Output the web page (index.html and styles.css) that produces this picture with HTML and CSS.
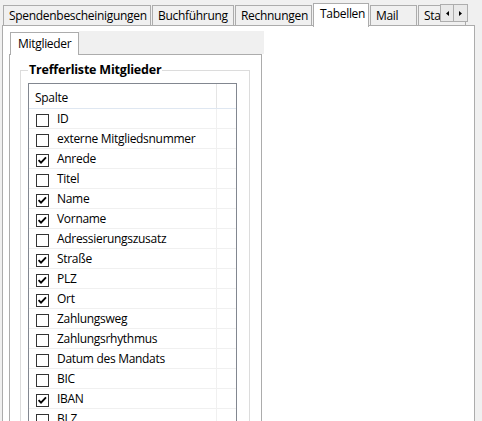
FILE: index.html
```html
<!DOCTYPE html>
<html lang="de">
<head>
<meta charset="utf-8">
<link rel="stylesheet" href="styles.css">
</head>
<body>
<div class="win">
  <div class="tabs">
    <div class="tab w1">Spendenbescheinigungen</div>
    <div class="tab w2">Buchführung</div>
    <div class="tab w3">Rechnungen</div>
    <div class="tab sel w4">Tabellen</div>
    <div class="tab w5">Mail</div>
    <div class="tab w6">Statistik</div>
    <div class="scroller">
      <span class="sbtn"><svg width="3" height="5" viewBox="0 0 3 5"><path d="M3 0V5L0 2.5Z" fill="#000"/></svg></span>
      <span class="sbtn"><svg width="3" height="5" viewBox="0 0 3 5"><path d="M0 0V5L3 2.5Z" fill="#000"/></svg></span>
    </div>
  </div>
  <div class="panel">
    <div class="itabs">
      <div class="itab">Mitglieder</div>
      <div class="istrip"></div>
    </div>
    <div class="ipanel">
      <fieldset class="group">
        <legend>Trefferliste Mitglieder</legend>
        <div class="lv">
          <div class="lvhead"><div class="hc1">Spalte</div><div class="hc2"></div></div>
          <div class="row"><div class="c1"><span class="cb"></span>ID</div><div class="c2"></div></div>
          <div class="row"><div class="c1"><span class="cb"></span>externe Mitgliedsnummer</div><div class="c2"></div></div>
          <div class="row"><div class="c1"><span class="cb on"><svg width="11" height="11" viewBox="0 0 11 11"><path d="M1.6 5.2L4 7.6L9 2.4" fill="none" stroke="#000" stroke-width="1.9"/></svg></span>Anrede</div><div class="c2"></div></div>
          <div class="row"><div class="c1"><span class="cb"></span>Titel</div><div class="c2"></div></div>
          <div class="row"><div class="c1"><span class="cb on"><svg width="11" height="11" viewBox="0 0 11 11"><path d="M1.6 5.2L4 7.6L9 2.4" fill="none" stroke="#000" stroke-width="1.9"/></svg></span>Name</div><div class="c2"></div></div>
          <div class="row"><div class="c1"><span class="cb on"><svg width="11" height="11" viewBox="0 0 11 11"><path d="M1.6 5.2L4 7.6L9 2.4" fill="none" stroke="#000" stroke-width="1.9"/></svg></span>Vorname</div><div class="c2"></div></div>
          <div class="row"><div class="c1"><span class="cb"></span>Adressierungszusatz</div><div class="c2"></div></div>
          <div class="row"><div class="c1"><span class="cb on"><svg width="11" height="11" viewBox="0 0 11 11"><path d="M1.6 5.2L4 7.6L9 2.4" fill="none" stroke="#000" stroke-width="1.9"/></svg></span>Straße</div><div class="c2"></div></div>
          <div class="row"><div class="c1"><span class="cb on"><svg width="11" height="11" viewBox="0 0 11 11"><path d="M1.6 5.2L4 7.6L9 2.4" fill="none" stroke="#000" stroke-width="1.9"/></svg></span>PLZ</div><div class="c2"></div></div>
          <div class="row"><div class="c1"><span class="cb on"><svg width="11" height="11" viewBox="0 0 11 11"><path d="M1.6 5.2L4 7.6L9 2.4" fill="none" stroke="#000" stroke-width="1.9"/></svg></span>Ort</div><div class="c2"></div></div>
          <div class="row"><div class="c1"><span class="cb"></span>Zahlungsweg</div><div class="c2"></div></div>
          <div class="row"><div class="c1"><span class="cb"></span>Zahlungsrhythmus</div><div class="c2"></div></div>
          <div class="row"><div class="c1"><span class="cb"></span>Datum des Mandats</div><div class="c2"></div></div>
          <div class="row"><div class="c1"><span class="cb"></span>BIC</div><div class="c2"></div></div>
          <div class="row"><div class="c1"><span class="cb on"><svg width="11" height="11" viewBox="0 0 11 11"><path d="M1.6 5.2L4 7.6L9 2.4" fill="none" stroke="#000" stroke-width="1.9"/></svg></span>IBAN</div><div class="c2"></div></div>
          <div class="row"><div class="c1"><span class="cb"></span>BLZ</div><div class="c2"></div></div>
        </div>
      </fieldset>
    </div>
  </div>
</div>
</body>
</html>
```

FILE: styles.css
```css
html, body {
  margin: 0;
  padding: 0;
}
body {
  background: #f0f0f0;
  width: 482px;
  height: 421px;
  overflow: hidden;
  font-family: "Segoe UI", "Open Sans", "Noto Sans", sans-serif;
  font-size: 12px;
  letter-spacing: -0.3px;
  color: #000;
}
.win {
  padding-top: 3px;
}
.tabs {
  position: relative;
  display: flex;
  align-items: flex-end;
  height: 22px;
  margin-left: 3px;
}
.tab {
  box-sizing: border-box;
  height: 20px;
  border: 1px solid #acacac;
  border-bottom: none;
  background: #f0f0f0;
  padding-left: 5px;
  line-height: 19px;
  white-space: nowrap;
  overflow: hidden;
  margin-right: 1px;
}
.tab.sel {
  position: relative;
  z-index: 2;
  height: 24px;
  margin-bottom: -2px;
  background: #fff;
  padding-left: 6px;
  line-height: 20px;
}
.w1 { width: 148px; }
.w2 { width: 82px; }
.w3 { width: 77px; }
.w4 { width: 56px; }
.w5 { width: 47px; }
.w6 { width: 48px; }
.scroller {
  position: absolute;
  left: 437px;
  top: 1px;
  display: flex;
  z-index: 3;
}
.sbtn {
  box-sizing: border-box;
  width: 14px;
  height: 18px;
  border: 1px solid #adadad;
  background: #e9e9e9;
  display: flex;
  align-items: center;
  justify-content: center;
}
.sbtn + .sbtn {
  margin-left: -1px;
  width: 15px;
}
.panel {
  margin-left: 2px;
  width: 473px;
  height: 420px;
  box-sizing: border-box;
  border: 1px solid #acacac;
  background: #fff;
}
.itabs {
  display: flex;
  height: 22px;
  margin-top: 6px;
  margin-left: 7px;
}
.itab {
  box-sizing: border-box;
  position: relative;
  z-index: 2;
  width: 69px;
  height: 23px;
  border: 1px solid #acacac;
  border-bottom: none;
  background: #fff;
  padding-left: 7px;
  line-height: 21px;
}
.istrip {
  width: 185px;
  height: 23px;
  margin-top: -1px;
  background: #f0f0f0;
}
.ipanel {
  box-sizing: border-box;
  margin-left: 6px;
  width: 253px;
  height: 400px;
  border: 1px solid #acacac;
  background: #fff;
  padding-top: 7px;
}
.group {
  margin: 0 0 0 10px;
  width: 230px;
  box-sizing: border-box;
  border: 1px solid #dcdcdc;
  padding: 5px 0 0 7px;
  min-width: 0;
}
.group legend {
  font-weight: bold;
  font-size: 12.5px;
  letter-spacing: -0.2px;
  padding: 0 1px;
  line-height: 16px;
}
.lv {
  box-sizing: border-box;
  width: 209px;
  height: 400px;
  border: 1px solid #828790;
  background: #fff;
}
.lvhead {
  display: flex;
  height: 24px;
  border-bottom: 1px solid #dfe7f1;
  background: #fff;
}
.hc1 {
  width: 188px;
  border-right: 1px solid #e5e5e5;
  padding-left: 6px;
  padding-top: 4px;
  line-height: 20px;
  box-sizing: border-box;
}
.hc2 {
  flex: 1;
}
.row {
  display: flex;
  height: 19px;
  border-bottom: 1px solid #f0f0f0;
}
.c1 {
  box-sizing: border-box;
  width: 188px;
  border-right: 1px solid #f0f0f0;
  display: flex;
  align-items: flex-start;
  line-height: 19px;
  white-space: nowrap;
}
.c2 {
  flex: 1;
}
.cb {
  box-sizing: border-box;
  width: 13px;
  height: 13px;
  border: 1px solid #333;
  background: #fff;
  margin: 5px 8px 0 7px;
  display: flex;
  flex: none;
}
```
